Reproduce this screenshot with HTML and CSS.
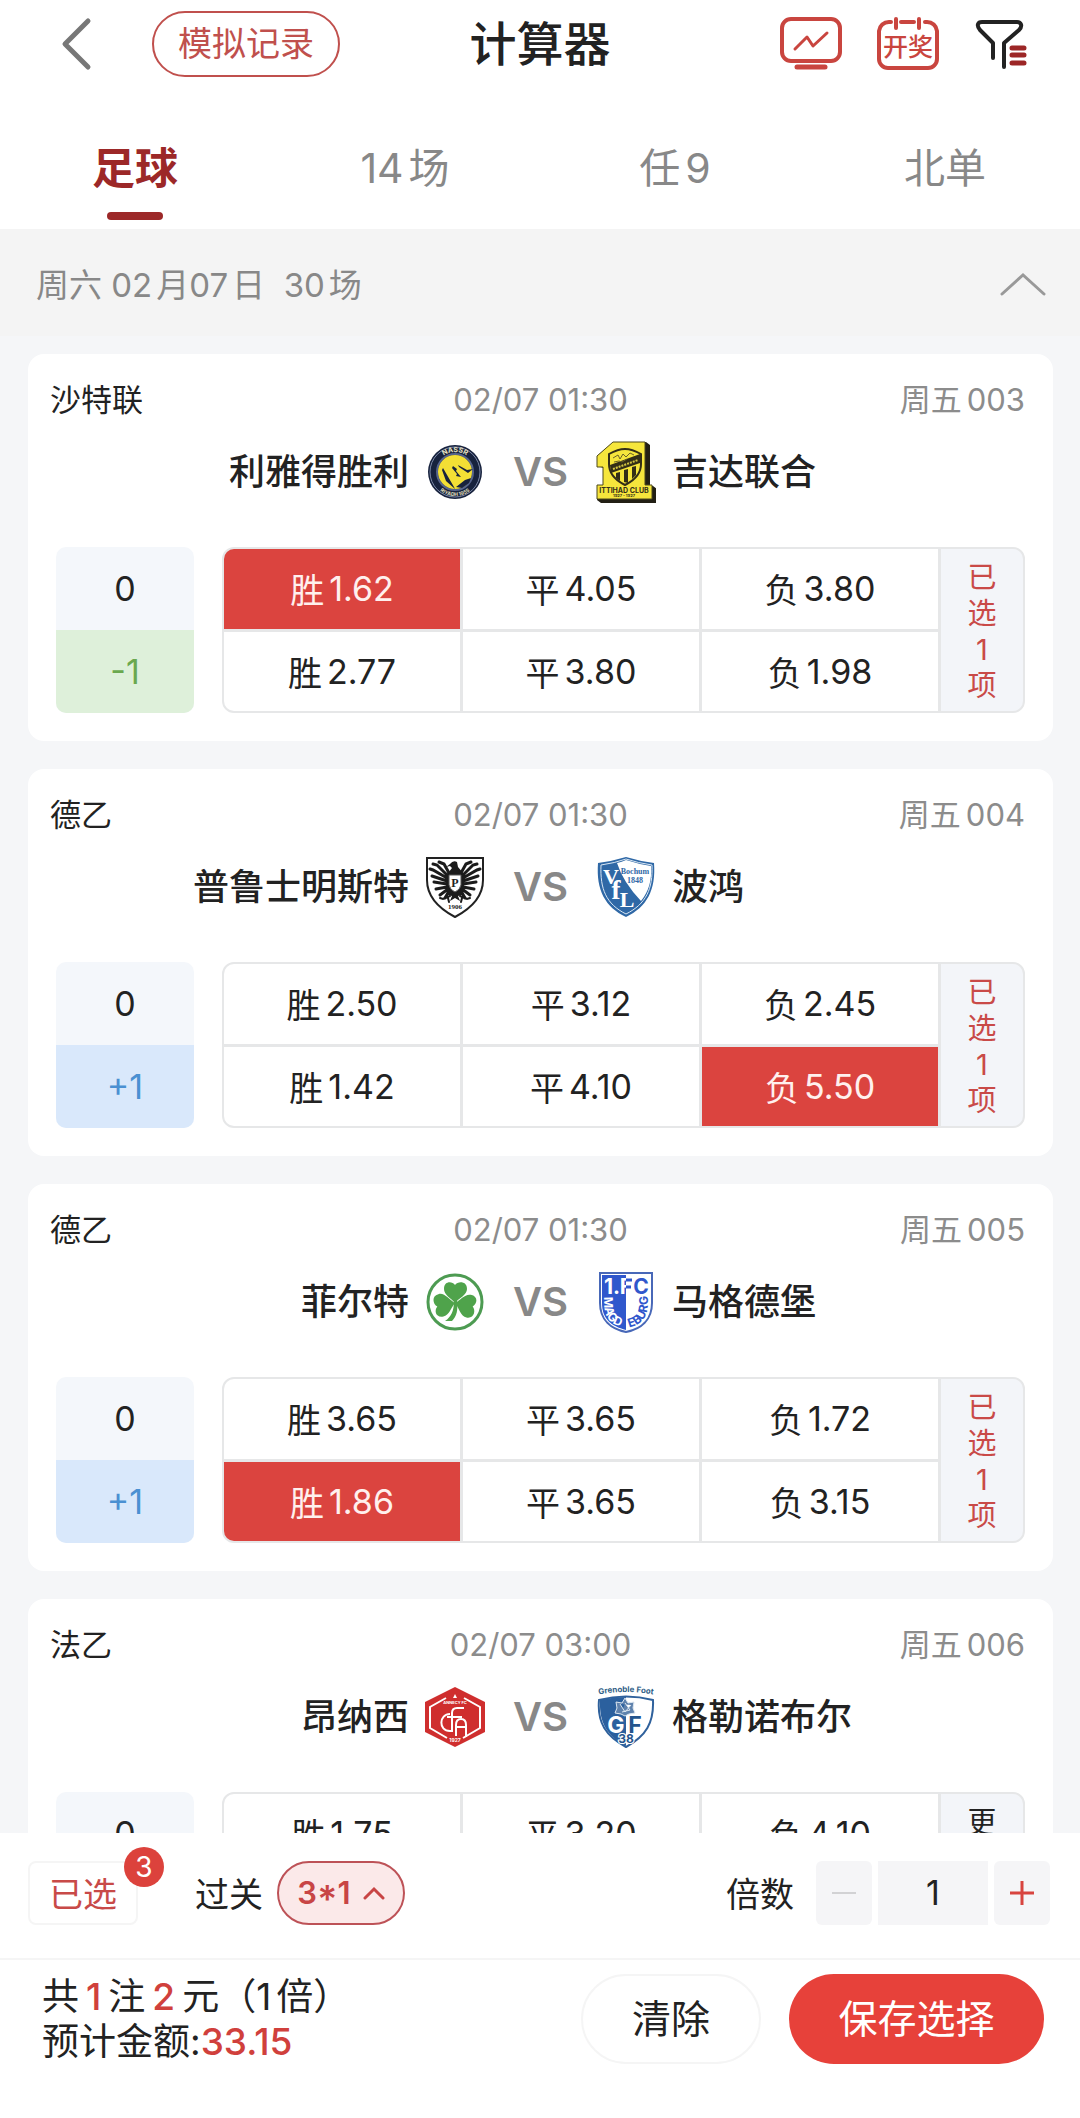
FILE: index.html
```html
<!DOCTYPE html>
<html lang="zh-CN">
<head>
    <meta charset="UTF-8">
    <meta name="viewport" content="width=device-width, initial-scale=1.0">
    <title>计算器</title>
    <link rel="stylesheet" href="styles.css">
</head>
<body>
    <header>
        <div class="header-left">
            <button class="back" aria-label="返回">
                <svg width="32" height="54" viewBox="0 0 32 54"><path d="M28 4 5 27l23 23" fill="none" stroke="#777" stroke-width="5" stroke-linecap="round" stroke-linejoin="round"/></svg>
            </button>
            <button class="record">模拟记录</button>
        </div>
        <h1>计算器</h1>
        <div class="header-right">
            <button aria-label="走势">
                <svg width="62" height="54" viewBox="0 0 62 54" fill="none" stroke="#c9453f" stroke-linecap="round" stroke-linejoin="round">
                    <rect x="2" y="2" width="58" height="42" rx="9" stroke-width="4"/>
                    <path d="M15 32 27 20l6 9 14-13" stroke-width="3"/>
                    <path d="M17 50h28" stroke-width="5"/>
                </svg>
            </button>
            <button aria-label="开奖">
                <svg width="62" height="54" viewBox="0 0 62 54" fill="none" stroke="#c9453f" stroke-linecap="round">
                    <path d="M14 5h-2a10 10 0 0 0-10 9v28a9 9 0 0 0 9 9h40a9 9 0 0 0 9-9V14a10 10 0 0 0-10-9h-2M24 5h13" stroke-width="4"/>
                    <path d="M19 2v9M42 2v9" stroke-width="4"/>
                    <text x="31" y="39" text-anchor="middle" font-size="25" font-weight="500" fill="#c9453f" stroke="none">开奖</text>
                </svg>
            </button>
            <button aria-label="筛选">
                <svg width="54" height="54" viewBox="-2 0 54 54" fill="none" stroke="#222" stroke-width="4" stroke-linecap="round" stroke-linejoin="round">
                    <path d="M17 41V26L4 13c-4-5-2-8 2-8h35c4 0 6 4 2 8L28 26v24"/>
                    <path d="M36 31h12M36 38h12M36 46h12" stroke="#9c2626" stroke-width="5"/>
                </svg>
            </button>
        </div>
    </header>

    <nav class="tabs">
        <a href="#zuqiu" class="active">足球</a>
        <a href="#14chang">14<span class="cn">场</span></a>
        <a href="#ren9">任<span class="cn">9</span></a>
        <a href="#beidan">北单</a>
    </nav>

    <main>
        <div class="date-bar">
            <h2>周六 02<span class="cn">月</span>07<span class="cn">日</span> &nbsp;30<span class="cn">场</span></h2>
            <button aria-label="收起">
                <svg width="46" height="26" viewBox="0 0 46 26"><path d="M2 24 23 5l21 19" fill="none" stroke="#999" stroke-width="3" stroke-linecap="round"/></svg>
            </button>
        </div>

        <section class="card">
            <div class="meta">
                <span class="league">沙特联</span>
                <time>02/07 01:30</time>
                <span class="number">周五<span class="cn">003</span></span>
            </div>
            <div class="teams">
                <div class="team home">
                    <span>利雅得胜利</span>
                    <svg class="crest" viewBox="0 0 60 62">
                        <circle cx="30" cy="31" r="27" fill="#17223d"/>
                        <circle cx="30" cy="31" r="25" fill="none" stroke="#7d89a8" stroke-width="1"/>
                        <circle cx="30" cy="31" r="18" fill="none" stroke="#56648c" stroke-width="2"/>
                        <circle cx="30" cy="31" r="17" fill="#f3df35"/>
                        <path d="m18 27 11 19 1 2-9-8-4-11zM28 25l4 3-1 2 5 6-5-1 1-2-5-6zM33 24l9 5 6-1-5 4-9-6zM31 46l9-7 6-2-2 5-7 5z" fill="#17223d"/>
                        <path id="nassrTop" d="M10 31a20 20 0 0 1 40 0" fill="none"/>
                        <path id="nassrBottom" d="M6 31a24 24 0 0 0 48 0" fill="none"/>
                        <text class="crest-text" font-size="7" fill="#e8e3c0"><textPath href="#nassrTop" startOffset="50%">NASSR</textPath></text>
                        <text class="crest-text" font-size="5" fill="#e8e3c0"><textPath href="#nassrBottom" startOffset="50%">RIYADH 1955</textPath></text>
                    </svg>
                </div>
                <span class="vs">VS</span>
                <div class="team away">
                    <svg class="crest" viewBox="0 0 60 62">
                        <path d="m18 1 32 0 4 3v41h3l4 3v14H5l-4-3V44h7V27l-7-2V15z" fill="#221f14"/>
                        <path d="M17 1h32v43h7v14H1V44h6V26H1V15z" fill="#f6e63c" stroke="#4d481c" stroke-width="1"/>
                        <path d="M13 13q9-5 16-5t16 5v10c0 10-6 16-16 21-10-5-16-11-16-21z" fill="#f6e63c" stroke="#332e17" stroke-width="2"/>
                        <path d="m14 24 30-11v9L15 32zM20 32l4-1v9l-4-3zM28 29l4-1v14l-4-1zM36 26l4-1v9l-4 4z" fill="#332e17"/>
                        <path d="m17 17 5-3 2 4 3-5 3 3 4-4 4 2M18 21l5-1 3 1 5-3" fill="none" stroke="#6b6228" stroke-width="1"/>
                        <path d="m17 28 25-9" stroke="#d3c540" stroke-width="2" stroke-dasharray="2 1"/>
                        <text class="crest-text" x="28" y="52" font-size="7" fill="#332e17">ITTIHAD CLUB</text>
                        <text class="crest-text" x="28" y="56" font-size="4" fill="#332e17">1927 - 1927</text>
                    </svg>
                    <span>吉达联合</span>
                </div>
            </div>
            <div class="odds">
                <div class="handicap">
                    <span>0</span>
                    <span class="minus">-1</span>
                </div>
                <div class="odds-grid">
                    <button class="selected"><span>胜</span>1.62</button>
                    <button><span>平</span>4.05</button>
                    <button><span>负</span>3.80</button>
                    <button><span>胜</span>2.77</button>
                    <button><span>平</span>3.80</button>
                    <button><span>负</span>1.98</button>
                    <button class="more chosen">已<br>选<br>1<br>项</button>
                </div>
            </div>
        </section>

        <section class="card">
            <div class="meta">
                <span class="league">德乙</span>
                <time>02/07 01:30</time>
                <span class="number">周五<span class="cn">004</span></span>
            </div>
            <div class="teams">
                <div class="team home">
                    <span>普鲁士明斯特</span>
                    <svg class="crest" viewBox="0 0 60 62">
                        <path d="M2 2h56v22c0 16-11 28-28 37C13 52 2 40 2 24z" fill="#fff" stroke="#222" stroke-width="2"/>
                        <g id="eagleWing" fill="none" stroke="#1b1b1b" stroke-width="3" stroke-linecap="round">
                            <path d="M24 17 19 8l-5-2M23 20 12 9 8 8M22 22 8 14l-3-1M22 25 7 20M22 28 9 26M22 31l-11 2M23 33l-8 6M24 35l-4 7"/>
                            <path d="m25 40-7 3-3-1M23 42l1 4" stroke-width="2"/>
                        </g>
                        <use href="#eagleWing" transform="matrix(-1 0 0 1 60 0)"/>
                        <path d="M25 8q3-4 7-2l1 5q5 5 7 10l-3 18-4 1 2 5-5-3-5 3 2-5-4-1-3-18 7-9-2-2-4 1z" fill="#1b1b1b"/>
                        <path d="M24 19h12v10q-1 5-6 7-5-2-6-7z" fill="#fff" stroke="#555" stroke-width="1"/>
                        <text class="crest-text serif" x="30" y="31" font-size="12" fill="#222">P</text>
                        <text class="crest-text serif" x="30" y="53" font-size="7" fill="#222">1906</text>
                    </svg>
                </div>
                <span class="vs">VS</span>
                <div class="team away">
                    <svg class="crest" viewBox="0 0 60 62">
                        <path d="M2 7Q17 5 30 1q13 4 28 6c2 27-7 44-28 54C9 51 0 34 2 7z" fill="#2f68a6"/>
                        <path d="M5 9q14-2 25-6 12 4 26 6c1 24-6 39-26 49C10 48 4 33 5 9z" fill="none" stroke="#d9e7f4" stroke-width="1"/>
                        <path d="M21 7q5-1 9-3 12 4 25 6c1 14-2 25-10 35Q27 26 21 7z" fill="#fff"/>
                        <g class="crest-text serif" fill="#fff">
                            <text x="15" y="28" font-size="22">V</text>
                            <text x="20" y="43" font-size="27">f</text>
                            <text x="31" y="51" font-size="22">L</text>
                        </g>
                        <text class="crest-text serif" x="39" y="18" font-size="8" fill="#2f68a6">Bochum</text>
                        <text class="crest-text serif" x="39" y="27" font-size="8" fill="#2f68a6">1848</text>
                    </svg>
                    <span>波鸿</span>
                </div>
            </div>
            <div class="odds">
                <div class="handicap">
                    <span>0</span>
                    <span class="plus">+1</span>
                </div>
                <div class="odds-grid">
                    <button><span>胜</span>2.50</button>
                    <button><span>平</span>3.12</button>
                    <button><span>负</span>2.45</button>
                    <button><span>胜</span>1.42</button>
                    <button><span>平</span>4.10</button>
                    <button class="selected"><span>负</span>5.50</button>
                    <button class="more chosen">已<br>选<br>1<br>项</button>
                </div>
            </div>
        </section>

        <section class="card">
            <div class="meta">
                <span class="league">德乙</span>
                <time>02/07 01:30</time>
                <span class="number">周五<span class="cn">005</span></span>
            </div>
            <div class="teams">
                <div class="team home">
                    <span>菲尔特</span>
                    <svg class="crest" viewBox="0 0 60 62">
                        <circle cx="30" cy="31" r="27" fill="#fff" stroke="#4d9b52" stroke-width="3"/>
                        <g fill="#4fa34b">
                            <path id="leaf" d="M30 32c-4-5-11-8-11-14 0-8 8-8 11-4 3-4 12-4 12 4 0 6-8 9-12 14z"/>
                            <use href="#leaf" transform="rotate(-101 30 32)"/>
                            <use href="#leaf" transform="rotate(101 30 32)"/>
                            <path d="M29 30h3c1 9 0 15-5 20h-7c6-4 9-10 9-20z"/>
                        </g>
                    </svg>
                </div>
                <span class="vs">VS</span>
                <div class="team away">
                    <svg class="crest" viewBox="0 0 60 62">
                        <path d="M4 2h52v30c0 17-11 26-26 29C15 58 4 49 4 32z" fill="#fff" stroke="#4868b8" stroke-width="2"/>
                        <path d="M6 4h24v55C15 55 6 48 6 32z" fill="#3057cc"/>
                        <g class="crest-text" font-size="21">
                            <text x="16" y="23" fill="#fff">1.</text>
                            <text x="30" y="23" fill="#fff">F</text>
                            <text x="45" y="23" fill="#3057cc">C</text>
                        </g>
                        <path d="M30 9h6M30 16h5" stroke="#3057cc" stroke-width="3"/>
                        <path id="magdeburgRing" d="M8 24v6c0 16 5 24 22 27 17-3 22-11 22-27v-6" fill="none"/>
                        <text class="crest-text ring-start" font-size="12" fill="#fff"><textPath href="#magdeburgRing" startOffset="2%">MAGD</textPath></text>
                        <text class="crest-text ring-end" font-size="12" fill="#3057cc"><textPath href="#magdeburgRing" startOffset="99%">EBURG</textPath></text>
                    </svg>
                    <span>马格德堡</span>
                </div>
            </div>
            <div class="odds">
                <div class="handicap">
                    <span>0</span>
                    <span class="plus">+1</span>
                </div>
                <div class="odds-grid">
                    <button><span>胜</span>3.65</button>
                    <button><span>平</span>3.65</button>
                    <button><span>负</span>1.72</button>
                    <button class="selected"><span>胜</span>1.86</button>
                    <button><span>平</span>3.65</button>
                    <button><span>负</span>3.15</button>
                    <button class="more chosen">已<br>选<br>1<br>项</button>
                </div>
            </div>
        </section>

        <section class="card">
            <div class="meta">
                <span class="league">法乙</span>
                <time>02/07 03:00</time>
                <span class="number">周五<span class="cn">006</span></span>
            </div>
            <div class="teams">
                <div class="team home">
                    <span>昂纳西</span>
                    <svg class="crest" viewBox="0 0 60 62">
                        <path d="m30 1 30 15v30L30 61 0 46V16z" fill="#cf2e2e"/>
                        <path d="M21 12 5 21v21l17 10M39 12l16 9v21L38 52" fill="none" stroke="#fff" stroke-width="2"/>
                        <path d="m30 8 2 4h-4z" fill="#fff"/>
                        <text class="crest-text" x="30" y="18" font-size="4" fill="#fff">ANNECY FC</text>
                        <g fill="none" stroke="#fff" stroke-width="2">
                            <path d="M25 28c-11 0-12 17 0 17h3M27 46V27q0-5 5-5h7M22 31h15"/>
                            <path d="M31 50V39q0-6 5-6t5 6v12M31 41h10" />
                        </g>
                        <text class="crest-text" x="30" y="56" font-size="5" fill="#fff">1927</text>
                    </svg>
                </div>
                <span class="vs">VS</span>
                <div class="team away">
                    <svg class="crest" viewBox="0 0 60 62">
                        <path id="grenobleTop" d="M0 9q30-6 60 0" fill="none"/>
                        <text class="crest-text" font-size="8" fill="#315f88"><textPath href="#grenobleTop" startOffset="50%">Grenoble Foot</textPath></text>
                        <path d="M3 14q27-7 54 0c1 23-7 36-27 47C10 50 1 37 3 14z" fill="#fff" stroke="#2f619c" stroke-width="2"/>
                        <path d="M4 14q13-3 26-3v49C11 50 3 37 4 14z" fill="#2b609e"/>
                        <path d="m29 12 3 5 6-1-1 6 2 5-6 1-4 2-4-2-6-1 2-5-1-6 6 1zM29 17l5 7-8 2M24 18l5 8 6-7" fill="#5f82ad" stroke="#dce6f0" stroke-width="1"/>
                        <g class="crest-text" font-size="23">
                            <text x="20" y="47" fill="#fff">G</text>
                            <text x="39" y="47" fill="#24558e">F</text>
                        </g>
                        <text class="crest-text" x="30" y="57" font-size="12" fill="#24558e" stroke="#fff" stroke-width="2" paint-order="stroke">38</text>
                    </svg>
                    <span>格勒诺布尔</span>
                </div>
            </div>
            <div class="odds">
                <div class="handicap">
                    <span>0</span>
                    <span class="minus">-1</span>
                </div>
                <div class="odds-grid">
                    <button><span>胜</span>1.75</button>
                    <button><span>平</span>3.20</button>
                    <button><span>负</span>4.10</button>
                    <button><span>胜</span>3.25</button>
                    <button><span>平</span>3.40</button>
                    <button><span>负</span>1.90</button>
                    <button class="more">更<br>多<br>玩<br>法</button>
                </div>
            </div>
        </section>
    </main>

    <footer>
        <div class="pass-row">
            <button class="picked">已选<span class="badge">3</span></button>
            <span class="pass-label">过关</span>
            <button class="pass">3*1
                <svg width="22" height="14" viewBox="0 0 22 14"><path d="m2 12 9-9 9 9" fill="none" stroke="#c84545" stroke-width="3" stroke-linecap="round"/></svg>
            </button>
            <div class="multiple">
                <label for="times">倍数</label>
                <button class="step" aria-label="减少" disabled>
                    <svg width="24" height="24" viewBox="0 0 24 24"><path d="M0 12h24" stroke="#d2d2d4" stroke-width="2"/></svg>
                </button>
                <input type="text" id="times" value="1" inputmode="numeric">
                <button class="step" aria-label="增加">
                    <svg width="24" height="24" viewBox="0 0 24 24"><path d="M0 12h24M12 0v24" stroke="#d8443f" stroke-width="3"/></svg>
                </button>
            </div>
        </div>
        <div class="total-row">
            <div class="total">
                <p>共<b>1</b>注<b>2</b>元（1<span class="cn">倍</span>）</p>
                <p>预计金额:<em>33.15</em></p>
            </div>
            <button class="clear">清除</button>
            <button class="save">保存选择</button>
        </div>
    </footer>
</body>
</html>
```

FILE: styles.css
```css
* {
    box-sizing: border-box;
}
body {
    display: flex;
    flex-direction: column;
    height: 100vh;
    margin: 0;
    font-family: Inter, "Noto Sans CJK SC", sans-serif;
    font-size: 34px;
    color: #222;
    background-color: #fff;
}
button, input {
    margin: 0;
    padding: 0;
    border: none;
    background: none;
    font: inherit;
    color: inherit;
}
button {
    cursor: pointer;
}
svg {
    display: block;
}
h1, h2, p {
    margin: 0;
}
/* small gap between digits and characters */
.cn {
    margin-left: 5px;
}

/* header */
header {
    display: grid;
    grid-template-columns: 1fr auto 1fr;
    align-items: center;
    height: 88px;
    padding: 0 52px;
}
.header-left, .header-right {
    display: flex;
    align-items: center;
}
.header-left {
    gap: 60px;
    padding-left: 8px;
}
.header-right {
    justify-content: flex-end;
    gap: 35px;
}
.record {
    height: 66px;
    padding: 0 24px;
    border: 2px solid #c0504d;
    border-radius: 33px;
    line-height: 62px;
    color: #c0504d;
}
h1 {
    font-size: 47px;
    font-weight: 500;
    line-height: 60px;
}

/* tabs */
.tabs {
    display: grid;
    grid-template-columns: repeat(4, 1fr);
    flex: none;
    height: 141px;
}
.tabs a {
    position: relative;
    padding-top: 50px;
    font-size: 41px;
    line-height: 60px;
    text-align: center;
    text-decoration: none;
    color: #888;
}
.tabs .active {
    font-size: 43px;
    font-weight: 700;
    color: #9c2828;
}
.tabs .active::after {
    content: "";
    position: absolute;
    bottom: 9px;
    left: 50%;
    width: 56px;
    height: 8px;
    margin-left: -28px;
    border-radius: 4px;
    background-color: #9c2828;
}

/* match list */
main {
    flex: 1;
    min-height: 0;
    overflow-y: auto;
    scrollbar-width: none;
    background-color: #f5f6f8;
}
.date-bar {
    display: flex;
    align-items: center;
    justify-content: space-between;
    height: 107px;
    margin-bottom: 18px;
    padding: 0 34px 0 36px;
    background-color: #f4f4f4;
}
.date-bar .cn {
    margin-left: 4px;
}
h2 {
    font-size: 33px;
    font-weight: 400;
    color: #888;
}
.card {
    margin: 0 27px 28px 28px;
    padding: 26px 28px 28px;
    border-radius: 16px;
    background-color: #fff;
}
.meta {
    display: grid;
    grid-template-columns: 1fr auto 1fr;
    font-size: 31px;
    line-height: 40px;
    color: #8c8c8c;
}
.league {
    margin-left: -6px;
    color: #222;
}
.number {
    text-align: right;
}
.teams {
    display: grid;
    grid-template-columns: 1fr auto 1fr;
    align-items: center;
    gap: 28px;
    margin-top: 21px;
}
.team {
    display: flex;
    align-items: center;
    gap: 16px;
    font-size: 36px;
    font-weight: 500;
    line-height: 56px;
}
.home {
    justify-content: flex-end;
}
.crest {
    flex: none;
    width: 60px;
    height: 62px;
}
.crest-text {
    font-weight: 700;
    text-anchor: middle;
}
.ring-start {
    text-anchor: start;
}
.ring-end {
    text-anchor: end;
}
.serif {
    font-family: "Liberation Serif", serif;
}
.vs {
    font-size: 40px;
    font-weight: 600;
    line-height: 60px;
    color: #888;
}

/* odds */
.odds {
    display: flex;
    gap: 28px;
    height: 166px;
    margin-top: 44px;
}
.handicap {
    display: grid;
    grid-template-rows: 1fr 1fr;
    flex: none;
    width: 138px;
    border-radius: 10px;
    overflow: hidden;
    text-align: center;
    line-height: 83px;
    background-color: #f4f7fb;
}
.minus {
    color: #6aa84f;
    background-color: #def0da;
}
.plus {
    color: #4a90d2;
    background-color: #d9e8fb;
}
.odds-grid {
    display: grid;
    grid-template-columns: 1fr 1fr 1fr 82px;
    grid-template-rows: 1fr 1fr;
    gap: 3px;
    flex: 1;
    border: 2px solid #e6e7e8;
    border-radius: 12px;
    overflow: hidden;
    background-color: #e6e7e8;
}
.odds-grid button {
    display: flex;
    align-items: center;
    justify-content: center;
    gap: 5px;
    background-color: #fff;
}
.odds-grid .selected {
    color: #fff0ee;
    background-color: #db443f;
}
.odds-grid .more {
    display: block;
    grid-column: 4;
    grid-row: 1 / 3;
    padding-top: 4px;
    font-size: 29px;
    line-height: 36px;
    background-color: #f3f5f9;
}
.odds-grid .chosen {
    color: #c94a48;
}

/* bottom bar */
footer {
    flex: none;
    background-color: #fff;
}
.pass-row {
    display: flex;
    align-items: center;
    height: 127px;
    padding: 0 30px 6px 28px;
    border-bottom: 2px solid #f5f5f5;
}
.picked {
    position: relative;
    width: 110px;
    height: 64px;
    border: 2px solid #f5f5f5;
    border-radius: 8px;
    color: #c84a48;
}
.badge {
    position: absolute;
    top: -16px;
    right: -28px;
    width: 40px;
    height: 40px;
    border-radius: 50%;
    font-size: 28px;
    line-height: 40px;
    color: #fff;
    background-color: #dc423c;
}
.pass-label {
    margin: 0 14px 0 57px;
}
.pass {
    display: flex;
    align-items: center;
    justify-content: center;
    gap: 12px;
    width: 128px;
    height: 64px;
    border: 2px solid #bd5257;
    border-radius: 32px;
    font-size: 31px;
    font-weight: 600;
    color: #c84545;
    background-color: #fbe9e9;
}
.multiple {
    display: flex;
    align-items: center;
    gap: 6px;
    margin-left: auto;
}
.multiple label {
    margin-right: 16px;
}
.step {
    display: flex;
    align-items: center;
    justify-content: center;
    width: 56px;
    height: 64px;
    border-radius: 6px;
    background-color: #f5f5f7;
}
.multiple input {
    width: 110px;
    height: 64px;
    text-align: center;
    background-color: #f5f5f7;
}
.total-row {
    display: flex;
    align-items: center;
    gap: 28px;
    padding: 14px 36px 54px 42px;
}
.total {
    flex: 1;
    font-size: 37px;
    line-height: 45px;
}
.total b, .total em {
    font-weight: 500;
    font-style: normal;
    color: #d0403c;
}
.total b {
    margin: 0 7px;
}
.clear, .save {
    height: 90px;
    border-radius: 45px;
    font-size: 39px;
    line-height: 88px;
}
.clear {
    width: 180px;
    border: 2px solid #f5f5f5;
    line-height: 84px;
}
.save {
    width: 255px;
    color: #fff;
    background-color: #e7413a;
}
```
